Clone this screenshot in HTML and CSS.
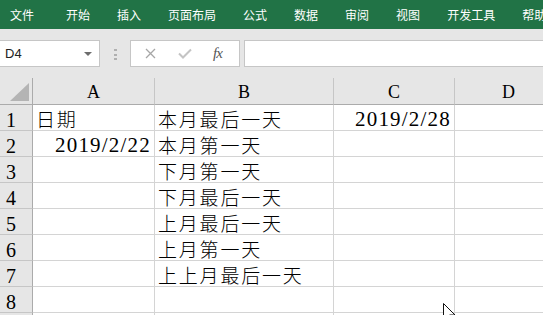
FILE: index.html
```html
<!DOCTYPE html>
<html lang="zh-CN">
<head>
    <meta charset="UTF-8">
    <title>日期计算</title>
    <link rel="stylesheet" href="styles.css">
</head>
<body>

    <!-- Ribbon tabs -->
    <nav class="ribbon">
        <span class="tab first">文件</span>
        <span class="tab">开始</span>
        <span class="tab">插入</span>
        <span class="tab">页面布局</span>
        <span class="tab">公式</span>
        <span class="tab">数据</span>
        <span class="tab">审阅</span>
        <span class="tab">视图</span>
        <span class="tab">开发工具</span>
        <span class="tab">帮助</span>
    </nav>

    <!-- Formula bar -->
    <div class="formula-bar">
        <div class="name-box">
            <span>D4</span>
            <span class="caret"></span>
        </div>
        <div class="grip">
            <svg width="3" height="12" viewBox="0 0 3 12">
                <rect x="0" y="0" width="3" height="2" fill="#b0b0b0"/>
                <rect x="0" y="5" width="3" height="2" fill="#b0b0b0"/>
                <rect x="0" y="9" width="3" height="2" fill="#b0b0b0"/>
            </svg>
        </div>
        <div class="fx-buttons">
            <svg class="icon-x" width="11" height="11" viewBox="0 0 11 11">
                <path d="M1 1 L10 10 M10 1 L1 10" stroke="#a6a6a6" stroke-width="1.3" fill="none"/>
            </svg>
            <svg class="icon-check" width="14" height="11" viewBox="0 0 14 11">
                <path d="M1 5.5 L5 9.5 L13 1.5" stroke="#c4c4c4" stroke-width="2" fill="none"/>
            </svg>
            <span class="fx">fx</span>
        </div>
        <div class="formula-input"></div>
    </div>

    <!-- Sheet grid -->
    <div class="sheet">
        <div class="corner">
            <svg width="19" height="18" viewBox="0 0 19 18"><polygon points="0,18 19,18 19,0" fill="#b4b4b4"/></svg>
        </div>
        <div class="col-head">A</div>
        <div class="col-head">B</div>
        <div class="col-head">C</div>
        <div class="col-head">D</div>

        <div class="row-head">1</div>
        <div class="cell text">日期</div>
        <div class="cell text">本月最后一天</div>
        <div class="cell date">2019/2/28</div>
        <div class="cell"></div>

        <div class="row-head">2</div>
        <div class="cell date">2019/2/22</div>
        <div class="cell text">本月第一天</div>
        <div class="cell"></div>
        <div class="cell"></div>

        <div class="row-head">3</div>
        <div class="cell"></div>
        <div class="cell text">下月第一天</div>
        <div class="cell"></div>
        <div class="cell"></div>

        <div class="row-head">4</div>
        <div class="cell"></div>
        <div class="cell text">下月最后一天</div>
        <div class="cell"></div>
        <div class="cell"></div>

        <div class="row-head">5</div>
        <div class="cell"></div>
        <div class="cell text">上月最后一天</div>
        <div class="cell"></div>
        <div class="cell"></div>

        <div class="row-head">6</div>
        <div class="cell"></div>
        <div class="cell text">上月第一天</div>
        <div class="cell"></div>
        <div class="cell"></div>

        <div class="row-head">7</div>
        <div class="cell"></div>
        <div class="cell text">上上月最后一天</div>
        <div class="cell"></div>
        <div class="cell"></div>

        <div class="row-head">8</div>
        <div class="cell"></div>
        <div class="cell"></div>
        <div class="cell"></div>
        <div class="cell"></div>

        <div class="row-head"></div>
        <div class="cell"></div>
        <div class="cell"></div>
        <div class="cell"></div>
        <div class="cell"></div>
    </div>

    <!-- Mouse pointer -->
    <svg class="pointer" width="13" height="21" viewBox="0 0 13 21">
        <path d="M0.5 0.5 L0.5 17 L4.5 13 L7.5 20 L9.5 19 L6.5 12 L12 12 Z" fill="#fff" stroke="#111" stroke-width="1"/>
    </svg>

</body>
</html>
```

FILE: styles.css
```css
body {
    margin: 0;
    width: 543px;
    height: 315px;
    overflow: hidden;
    position: relative;
    background-color: #e6e6e6;
    font-family: "Noto Sans CJK SC", sans-serif;
}

/* Ribbon */
.ribbon {
    height: 29px;
    background-color: #217346;
    display: flex;
    align-items: center;
    gap: 27px;
    padding-left: 10px;
    white-space: nowrap;
    overflow: hidden;
}
.tab {
    color: #ffffff;
    font-size: 12px;
    line-height: 12px;
}
.tab.first {
    margin-right: 5px;
}

/* Formula bar */
.formula-bar {
    display: flex;
    height: 27px;
    padding: 11px 0;
}
.name-box {
    width: 100px;
    box-sizing: border-box;
    background-color: #ffffff;
    border: 1px solid #c6c6c6;
    border-left: none;
    display: flex;
    align-items: center;
    justify-content: space-between;
    padding: 0 7px 0 5px;
    font-family: "Liberation Sans", sans-serif;
    font-size: 13px;
    color: #222;
}
.caret {
    width: 0;
    height: 0;
    border-left: 4px solid transparent;
    border-right: 4px solid transparent;
    border-top: 4px solid #6d6d6d;
}
.grip {
    width: 30px;
    display: flex;
    align-items: center;
    justify-content: center;
    padding-top: 2px;
    box-sizing: border-box;
}
.fx-buttons {
    width: 110px;
    box-sizing: border-box;
    background-color: #ffffff;
    border: 1px solid #c6c6c6;
    display: flex;
    align-items: center;
    padding-left: 14px;
}
.icon-x {
    margin-right: 22px;
}
.icon-check {
    margin-right: 21px;
}
.fx {
    font-family: "Liberation Serif", serif;
    font-style: italic;
    font-size: 15px;
    color: #555;
    letter-spacing: -1px;
}
.formula-input {
    flex: 1;
    margin-left: 4px;
    background-color: #ffffff;
    border: 1px solid #c6c6c6;
    border-right: none;
}

/* Sheet */
.sheet {
    display: grid;
    grid-template-columns: 33px 122px 179px 121px 108px;
    grid-template-rows: 27px repeat(9, 26px);
    height: 237px;
    overflow: hidden;
    background-color: #ffffff;
}
.sheet > div {
    box-sizing: border-box;
    border-right: 1px solid #d4d4d4;
    border-bottom: 1px solid #d4d4d4;
    display: flex;
    align-items: flex-end;
    overflow: hidden;
    white-space: nowrap;
}
.corner {
    background-color: #e6e6e6;
    justify-content: flex-end;
    padding: 0 3px 3px 0;
    border-right-color: #ababab !important;
    border-bottom-color: #ababab !important;
}
.col-head {
    background-color: #e6e6e6;
    justify-content: center;
    border-right-color: #c6c6c6 !important;
    border-bottom-color: #ababab !important;
    font-family: "Liberation Serif", serif;
    font-size: 18px;
    line-height: 18px;
    padding-bottom: 3px;
}
.row-head {
    background-color: #e6e6e6;
    padding-left: 6px;
    border-right-color: #ababab !important;
    border-bottom-color: #c6c6c6 !important;
    font-family: "Liberation Serif", serif;
    font-size: 20px;
    line-height: 20px;
}
.cell.text {
    padding: 0 0 2px 3px;
    font-size: 19px;
    line-height: 19px;
    letter-spacing: 1.8px;
    font-weight: 300;
}
.cell.date {
    justify-content: flex-end;
    padding-right: 3px;
    font-family: "Liberation Serif", serif;
    font-size: 21px;
    line-height: 21px;
    letter-spacing: 1.2px;
}

.pointer {
    position: absolute;
    left: 443px;
    top: 303px;
}
```
